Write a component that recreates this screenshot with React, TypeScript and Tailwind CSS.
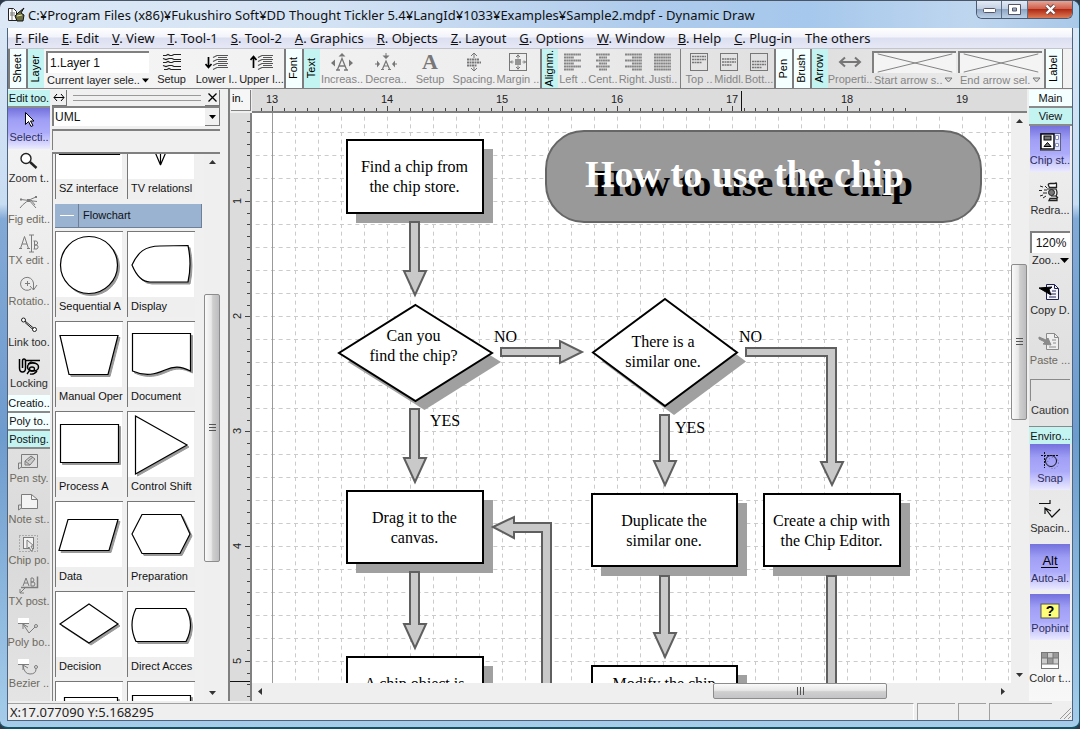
import React from "react";

type Box = { x: number; y: number; w: number; h: number };

const SCROLL_X = 252;
const SCROLL_Y = 113;
const INCH = 115;

/* ---------- small icon helpers ---------- */

function Ico({ children, h = 20, c = "#222" }: { children: React.ReactNode; h?: number; c?: string }) {
  return (
    <svg width="24" height={h} viewBox={`0 0 24 ${h}`} fill="none" stroke={c} strokeWidth="1" aria-hidden="true" className="shrink-0">
      {children}
    </svg>
  );
}

const G = "#7c7c7c";

const icoSelect = <Ico c="#000"><path d="M8.500 1.500v12l3-3 2.500 5 2-1-2.500-4.500H17z" fill="#fff" /></Ico>;
const icoZoom = (
  <Ico c="#222">
    <circle cx="9" cy="6.500" r="5" fill="#fff" strokeWidth="1.400" />
    <path d="M13 10l6.500 6" strokeWidth="2.400" />
  </Ico>
);
const icoFig = (
  <Ico c={G}>
    <path d="M3 15Q8 8 19 4M4 6.500l16 2M11 6l8 9M14 7l4 5" />
    <path d="M3 5.500h2v2H3zM10 6h3v3h-3zM18 3h2v2h-2z" fill={G} stroke="none" />
  </Ico>
);
const icoTx = (
  <Ico c={G}>
    <path d="M3.500 14.500l4-12 4 12M5 10h5M2 14.500h3M10 14.500h3M14.500 1v17M12 1h5M12 18h5M17.500 7v8M16.500 7h3q2.500 2 0 4h-2.500h3q2.500 2 0 4h-3.500" />
  </Ico>
);
const icoRot = (
  <Ico c={G}>
    <path d="M14 14a6.500 6.500 0 1 1 2.500-6v7M13 11l3.500 4 3.500-5M8 8.500h5M10.500 6v5" />
  </Ico>
);
const icoLink = (
  <Ico c="#222">
    <circle cx="6.500" cy="4" r="2" fill="#fff" />
    <circle cx="17.500" cy="13.500" r="2" fill="#fff" />
    <path d="M8 5l8.500 7M8 6.500l8 7" />
  </Ico>
);
const icoLock = (
  <Ico c="#000">
    <path d="M2.500 2v9q0 4 3 4t3-4V4q0-2-1.500-2T5.500 4v7M9 3.500h14" strokeWidth="1.500" />
    <ellipse cx="16" cy="10" rx="5.500" ry="4" strokeWidth="1.500" fill="#ddd" />
    <ellipse cx="15" cy="12" rx="2.500" ry="2" strokeWidth="1.300" />
    <path d="M10 17l3-4M11 7l3-2 6 2M20 14q-3 4-7 3" strokeWidth="1.300" />
  </Ico>
);
const icoPen = (
  <Ico c={G}>
    <path d="M4.500 2.500h16v13h-16zM1.500 17v-6h3M1.500 17l3-2" />
    <path d="M8 13V9l6-5 4 3-5 6zM8 9l5 4M11 9l5-4" fill="#ccc" />
  </Ico>
);
const icoNote = (
  <Ico c={G}>
    <path d="M4.500 1.500h10l6 5v9h-16z" fill="#f3f3f3" />
    <path d="M14.500 1.500v5h6M1.500 17v-5h3M1.500 17l3-2" />
  </Ico>
);
const icoChip = (
  <Ico c={G}>
    <rect x="2.500" y="1.500" width="18" height="16" strokeDasharray="1 2" />
    <rect x="6.500" y="3.500" width="10" height="11" fill="#f3f3f3" />
    <path d="M10 6v9l2-2 2 4 2-1-2-4h3z" fill="#eee" />
  </Ico>
);
const icoTxPost = (
  <Ico c={G}>
    <path d="M4 12.500h16.500v-11" strokeWidth="1.500" />
    <path d="M6 11l3-8 3 8M7 8h4M14 3v8h3q2-2 0-4h-3 2q2-2 0-4zM8 13l-5 5M3 14v4h4" />
  </Ico>
);
const icoPoly = (
  <Ico c={G}>
    <rect x="1" y="2" width="11" height="5" fill="#fff" stroke="none" />
    <path d="M1 7.500h11M6 8l6 9 6-6M6 13V8l5 3" />
    <circle cx="19" cy="10" r="1.500" />
  </Ico>
);
const icoBezier = (
  <Ico c={G}>
    <rect x="1" y="2" width="11" height="5" fill="#fff" stroke="none" />
    <path d="M1 7.500h11M6 8q1 9 7 9t6-5M6 13V8l5 3" />
    <circle cx="19" cy="10" r="1.500" />
  </Ico>
);

const icoChipSt = (
  <Ico h={22} c="#000">
    <rect x="2.500" y="2.500" width="20" height="17" fill="#dfe3ff" strokeDasharray="1 1" />
    <rect x="3" y="3" width="13" height="15" fill="#fff" strokeWidth="1.400" />
    <rect x="6" y="5" width="7" height="4" fill="#777" />
    <path d="M6 15.500l3.500-4 3.500 4z" fill="#777" />
    <path d="M17.500 4.500h3v4h-3zM17.500 12.500h3v3h-3z" fill="#fff" stroke="#8890c8" />
  </Ico>
);
const icoRedraw = (
  <Ico h={22} c="#222">
    <path d="M10.500 4.500q-1-2 2-2h4q2-1 2 0v4h-7zM12 17.500h7v2h-8zM18 15l2 2" fill="#fff" strokeWidth="1.300" />
    <path d="M9 8h9q2 4 0 7h-5" strokeWidth="1.200" />
    <circle cx="13.500" cy="11.500" r="3" fill="#777" />
    <path d="M2 5l3 1M1 9.500h3M6 9h3M2 15l3-1M5 17l3-2M5 12h4M7 5l2 2" />
  </Ico>
);
const icoCopy = (
  <Ico h={22} c="#1c2050">
    <path d="M8.500 3.500h8l4 4v11h-12z" fill="#f4f4ff" />
    <path d="M16.500 3.500v4h4M14 10h4M13 13h5M11 16h7" />
    <path d="M1 7l13-1-3 2.500 2 5.500-6-3.500z" fill="#000" stroke="#000" />
  </Ico>
);
const icoPaste = (
  <Ico h={22} c="#8a8a8a">
    <path d="M8.500 2.500h8l4 4v12h-12z" fill="#eee" />
    <path d="M16.500 2.500v4h4M14 9h4M15 12h3M11 16h7" />
    <path d="M1 6l7 3 2-2 3 7-8-1 2-2-6-3z" fill="#8a8a8a" />
  </Ico>
);
const icoSnap = (
  <Ico h={22} c="#111">
    <path d="M3 6.500h17M6.500 3v16" strokeDasharray="2 1" />
    <circle cx="13" cy="12" r="5.500" />
    <circle cx="15" cy="14" r="5.500" stroke="#66a" strokeDasharray="1 2" />
  </Ico>
);
const icoSpacing = <Ico h={22} c="#111"><path d="M1 4.500h11V1M7 9l7 9 8-8M7 15V9l6 3" strokeWidth="1.200" /></Ico>;
const icoHint = (
  <Ico h={22} c="#555">
    <rect x="3" y="5" width="18" height="14" fill="#fdfd7a" />
    <text x="12" y="17" textAnchor="middle" fill="#000" stroke="none" className="font-['Liberation_Sans'] text-[14px] font-bold">?</text>
  </Ico>
);
const icoAlt = (
  <Ico h={22} c="#000">
    <text x="12" y="16" textAnchor="middle" fill="#000" stroke="none" className="font-['Liberation_Sans'] text-[13px]">Alt</text>
    <path d="M3 18.500h17" />
  </Ico>
);
const icoColor = (
  <Ico h={22} c="#777">
    <rect x="3.500" y="3.500" width="17" height="16" fill="#fff" />
    <path d="M4 4h5v5H4zM15 4h5v5h-5zM9 9h6v6H9z" fill="#999" stroke="none" />
    <path d="M9 4h6v5H9zM4 9h5v6H4zM15 9h5v6h-5z" fill="#ccc" stroke="none" />
    <path d="M9.500 4v11M15 4v11M4 9h16M4 15h16" />
  </Ico>
);

/* ---------- top toolbar icons ---------- */

function Wide({ children, c = "#777" }: { children: React.ReactNode; c?: string }) {
  return (
    <svg width="24" height="18" viewBox="0 0 24 18" fill="none" stroke={c} aria-hidden="true" className="shrink-0">
      {children}
    </svg>
  );
}
const layers = "M8 4.500l4-2h11M8 8.500l4-2h11M8 12.500l4-2h11M8 16.500l4-2h11M13 4.500h9M13 8.500h9M13 12.500h9";
const icoSetupLayer = (
  <Wide c="#222">
    <path d="M3 2.500h3l2-1 2 1h2l2-1h7M3 5.500l3 1 3-1h3l2 1h7M3 9.500h3l2-1 2 1h2l2-1h7M3 12.500l3 1 3-1h3l2 1h7M4 16.500h3l2-1 2 1h10" strokeWidth="1.200" />
  </Wide>
);
const icoLower = (
  <Wide c="#555">
    <path d={layers} strokeWidth="1.200" />
    <path d="M3.500 4v10M0.500 11l3 3.500 3-3.500" stroke="#000" strokeWidth="1.700" />
  </Wide>
);
const icoUpper = (
  <Wide c="#555">
    <path d={layers} strokeWidth="1.200" />
    <path d="M3.500 15V4M0.500 7l3-3.500 3 3.500" stroke="#000" strokeWidth="1.700" />
  </Wide>
);
const icoInc = (
  <Wide>
    <path d="M7.500 16.500l4.500-11 4.500 11M9 13h6M6 17h4M14 17h4" strokeWidth="1.300" />
    <path d="M12 0L8.500 3.500h7zM1 10l4-3.500v7zM23 10l-4-3.500v7z" fill="#777" stroke="none" />
  </Wide>
);
const icoDec = (
  <Wide>
    <path d="M8.500 16L12 8l3.500 8M10 13h4M7 16.500h3M14 16.500h3" strokeWidth="1.200" />
    <path d="M12 6L8.500 2.500h7z M6 11L3 7.500v7zM18 11l3-3.500v7z" fill="#777" stroke="none" />
    <path d="M12 0v3M1 11h3M20 11h3" />
  </Wide>
);
const icoA = (
  <Wide>
    <text x="12" y="16" textAnchor="middle" fill="#777" stroke="none" className="font-['Liberation_Serif'] text-[22px] leading-none font-bold">A</text>
  </Wide>
);
const icoSpace = (
  <Wide>
    <path d="M5 6.500h12M5 9.500h14M5 12.500h10" strokeWidth="1.800" strokeDasharray="2 0.500" />
    <path d="M12 0v5M9 3l3-3 3 3M12 18v-4M9 15l3 3 3-3" />
  </Wide>
);
const icoMargin = (
  <Wide>
    <rect x="3.500" y="0.500" width="17" height="17" />
    <path d="M9 7h6M9 9h6M9 11h6" strokeWidth="1.500" />
    <path d="M12 1.500v4M10 4l2-2 2 2M12 16.500v-4M10 14l2 2 2-2M4.500 9h3M6 7.500L4.500 9 6 10.500M19.500 9h-3M18 7.500L19.500 9 18 10.500" />
  </Wide>
);
const rows = (d: string) => <Wide c="#858585"><path d={d} strokeWidth="2" strokeDasharray="2 0.300" /></Wide>;
const icoLeft = rows("M3 1.500h17M3 4.500h10M3 7.500h17M3 10.500h10M3 13.500h17M3 16.500h10");
const icoCenter = rows("M5 1.500h14M8 4.500h8M5 7.500h14M8 10.500h8M5 13.500h14M8 16.500h8");
const icoRight = rows("M4 1.500h17M11 4.500h10M4 7.500h17M11 10.500h10M4 13.500h17M11 16.500h10");
const icoJust = rows("M3 1.500h17M3 4.500h17M3 7.500h17M3 10.500h17M3 13.500h17M3 16.500h17");
const boxRows = (y: number) => (
  <Wide>
    <rect x="3.500" y="0.500" width="17" height="17" />
    <path d={`M5 ${y}h14M5 ${y + 3}h14M5 ${y + 6}h10`} strokeWidth="1.300" strokeDasharray="2 0.500" />
  </Wide>
);
const icoProps = (
  <Wide>
    <path d="M3 9h18" strokeWidth="2" />
    <path d="M7 4.500L2 9l5 4.500M17 4.500L22 9l-5 4.500" strokeWidth="2" />
  </Wide>
);

/* ---------- window parts ---------- */

function TitleBar() {
  return (
    <header className="flex h-[27px] shrink-0 items-center bg-[linear-gradient(90deg,#dce8f6_0%,#d4e3f4_30%,#aecbec_60%,#a6c8ec_75%,#bfd6ef_90%,#a9c8e8_100%)] pl-2">
      <svg width="17" height="16" viewBox="0 0 17 16" aria-hidden="true" className="shrink-0">
        <path d="M0.500 1.500h5l3 3v9h-8z" fill="#fff" stroke="#222" />
        <path d="M2 6h5M2 8h5M4 2v11" stroke="#777" />
        <path d="M7 9l2 5h6l1-6-3-2 3-5-6 5z" fill="#6d6f43" stroke="#111" />
        <path d="M9 9l5-1" stroke="#e8e8a0" />
      </svg>
      <h1 className="ml-[3px] grow truncate font-['Noto_Sans',sans-serif] text-[13px] leading-6 text-[#111]">
        C:¥Program Files (x86)¥Fukushiro Soft¥DD Thought Tickler 5.4¥LangId¥1033¥Examples¥Sample2.mdpf - Dynamic Draw
      </h1>
      <div className="mr-[6px] flex h-[18px] shrink-0 self-start overflow-hidden rounded-b-md border border-t-0 border-[#4b5a70]">
        <button aria-label="Minimize" className="flex w-[25px] items-center justify-center border-r border-[#5d6d84] bg-[linear-gradient(#e3ebf5,#c3d0e2_45%,#8fa6c4_50%,#bcd0e6)]">
          <svg width="13" height="6" viewBox="0 0 13 6"><rect x="0.500" y="1.500" width="12" height="4" rx="1" fill="#fff" stroke="#556" /></svg>
        </button>
        <button aria-label="Maximize" className="flex w-[26px] items-center justify-center border-r border-[#5d6d84] bg-[linear-gradient(#e3ebf5,#c3d0e2_45%,#8fa6c4_50%,#bcd0e6)]">
          <svg width="13" height="11" viewBox="0 0 13 11"><path d="M0.500 0.500h12v10h-12zM4.500 4h4v3h-4z" fill="#fff" fillRule="evenodd" stroke="#556" /></svg>
        </button>
        <button aria-label="Close" className="flex w-[44px] items-center justify-center bg-[linear-gradient(#e6a596,#d0604c_45%,#b02a14_50%,#dd7b55)]">
          <svg width="13" height="11" viewBox="0 0 13 11"><path d="M2.500 1.500l8 8M10.500 1.500l-8 8" stroke="#644" strokeWidth="4" /><path d="M2.500 1.500l8 8M10.500 1.500l-8 8" stroke="#fff" strokeWidth="2.400" /></svg>
        </button>
      </div>
    </header>
  );
}

const menus: [string, string][] = [
  ["F", ". File"], ["E", ". Edit"], ["V", ". View"], ["T", ". Tool-1"], ["S", ". Tool-2"], ["A", ". Graphics"],
  ["R", ". Objects"], ["Z", ". Layout"], ["G", ". Options"], ["W", ". Window"], ["B", ". Help"], ["C", ". Plug-in"], ["", "The others"],
];

function MenuBar() {
  return (
    <nav className="flex h-[21px] shrink-0 items-center gap-[13px] border-b border-[#c4c4cc] bg-[linear-gradient(#ffffff,#f2f3fb_45%,#dcdff0_50%,#e6e8f6)] pl-[7px] font-['Noto_Sans',sans-serif] text-[13px] text-[#111]">
      {menus.map(([k, rest]) => (
        <button key={k + rest} className="leading-5 whitespace-nowrap"><span className="underline">{k}</span>{rest}</button>
      ))}
    </nav>
  );
}

function VTab({ label, on = false }: { label: string; on?: boolean }) {
  return (
    <button className={`flex w-[18px] shrink-0 items-center justify-center overflow-hidden border-l-2 border-[#7d7d7d] pr-0.5 ${on ? "bg-[#c3f4f1]" : "bg-[#f4ffff]"}`}>
      <span className="rotate-180 whitespace-nowrap [writing-mode:vertical-rl]">{label}</span>
    </button>
  );
}

function Tool({ label, icon, w, off = true }: { label: string; icon: React.ReactNode; w: string; off?: boolean }) {
  return (
    <button className={`flex ${w} shrink-0 flex-col items-center pt-1 ${off ? "text-[#858585]" : "text-[#222]"}`}>
      {icon}
      <span className="leading-4 whitespace-nowrap">{label}</span>
    </button>
  );
}

function ArrowPick({ label }: { label: string }) {
  return (
    <button className="flex w-[86px] shrink-0 flex-col pt-0.5 pr-0.5 text-[#858585]">
      <svg width="84" height="22" viewBox="0 0 84 22" className="border-t-2 border-l-2 border-[#808080] bg-[#f4f4f4]" aria-hidden="true">
        <path d="M1 1L83 21M1 21L83 1" stroke="#777" />
      </svg>
      <span className="flex items-center gap-0.5 pl-0.5 leading-[14px] whitespace-nowrap">
        {label}
        <svg width="9" height="6" viewBox="0 0 9 6" aria-hidden="true"><path d="M1 1h7L4.500 5z" fill="#ddd" stroke="#777" /></svg>
      </span>
    </button>
  );
}

function Toolbar() {
  return (
    <div className="flex h-10 shrink-0 overflow-hidden border-b border-[#808080] bg-[linear-gradient(90deg,#f6f6f6,#ededed_50%,#dedede_75%,#f2f2f2)] text-[11px]">
      <VTab label="Sheet" />
      <VTab label="Layer" on />
      <div className="flex w-[105px] shrink-0 flex-col pt-0.5 pl-0.5">
        <input aria-label="Current layer" defaultValue="1.Layer 1" className="h-[22px] w-full border-t-2 border-l-2 border-[#808080] bg-white pl-0.5 text-[12px] text-[#111]" />
        <button className="flex items-center gap-0.5 pl-px leading-[14px] whitespace-nowrap text-[#222]">
          Current layer sele..
          <svg width="9" height="5" viewBox="0 0 9 5" aria-hidden="true"><path d="M0 0h9L4.500 5z" /></svg>
        </button>
      </div>
      <Tool w="w-[45px]" label="Setup" icon={icoSetupLayer} off={false} />
      <Tool w="w-[45px]" label="Lower l.." icon={icoLower} off={false} />
      <Tool w="w-[45px]" label="Upper l..." icon={icoUpper} off={false} />
      <VTab label="Font" />
      <VTab label="Text" on />
      <Tool w="w-[44px]" label="Increas.." icon={icoInc} />
      <Tool w="w-[44px]" label="Decrea.." icon={icoDec} />
      <Tool w="w-[44px]" label="Setup" icon={icoA} />
      <Tool w="w-[44px]" label="Spacing." icon={icoSpace} />
      <Tool w="w-[44px]" label="Margin .." icon={icoMargin} />
      <VTab label="Alignm." on />
      <Tool w="w-[30px]" label="Left .." icon={icoLeft} />
      <Tool w="w-[30px]" label="Cent.." icon={icoCenter} />
      <Tool w="w-[30px]" label="Right." icon={icoRight} />
      <Tool w="w-[30px]" label="Justi.." icon={icoJust} />
      <div className="mr-[3px] ml-0.5 w-px shrink-0 bg-[#808080]" />
      <Tool w="w-[30px]" label="Top .." icon={boxRows(3.5)} />
      <Tool w="w-[30px]" label="Middl." icon={boxRows(6)} />
      <Tool w="w-[30px]" label="Bott..." icon={boxRows(8.5)} />
      <VTab label="Pen" />
      <VTab label="Brush" />
      <VTab label="Arrow" on />
      <Tool w="w-[44px]" label="Properti.." icon={icoProps} />
      <ArrowPick label="Start arrow s.." />
      <ArrowPick label="End arrow sel." />
      <VTab label="Label" />
      <div className="w-px bg-[#808080]" />
    </div>
  );
}

function HTab({ label, on = false }: { label: string; on?: boolean }) {
  return (
    <button className={`h-[18px] w-full shrink-0 overflow-hidden border-b-2 border-[#8a8a8a] text-[11px] leading-4 whitespace-nowrap text-[#111] ${on ? "bg-[#c3f4f1]" : "bg-[#f4ffff]"}`}>
      {label}
    </button>
  );
}

type SideItem = { label: string; icon: React.ReactNode; tone?: "on" | "off" };

function tone(t?: string) {
  if (t === "on") return "bg-[linear-gradient(#7472dc,#a09ff6_30%,#acabfa_60%,#ecebff)] text-[#2d2d60]";
  if (t === "off") return "text-[#6e6a60]";
  return "text-[#2c2c2c]";
}

function LeftButton({ label, icon, tone: t }: SideItem) {
  return (
    <button className={`flex h-[41px] w-full shrink-0 flex-col items-center pt-[3px] ${tone(t)}`}>
      {icon}
      <span className="leading-3 whitespace-nowrap">{label}</span>
    </button>
  );
}

function RightButton({ label, icon, tone: t }: SideItem) {
  return (
    <div className="h-[50px] w-full shrink-0 pl-px">
      <button className={`flex h-[46px] w-10 flex-col items-center pt-[5px] ${tone(t)}`}>
        {icon}
        <span className="leading-[14px] whitespace-nowrap">{label}</span>
      </button>
    </div>
  );
}

const editTools: SideItem[] = [
  { label: "Selecti..", icon: icoSelect, tone: "on" },
  { label: "Zoom t..", icon: icoZoom },
  { label: "Fig edit..", icon: icoFig, tone: "off" },
  { label: "TX edit .", icon: icoTx, tone: "off" },
  { label: "Rotatio..", icon: icoRot, tone: "off" },
  { label: "Link too.", icon: icoLink },
  { label: "Locking", icon: icoLock },
];
const postTools: SideItem[] = [
  { label: "Pen sty.", icon: icoPen, tone: "off" },
  { label: "Note st..", icon: icoNote, tone: "off" },
  { label: "Chip po.", icon: icoChip, tone: "off" },
  { label: "TX post.", icon: icoTxPost, tone: "off" },
  { label: "Poly bo..", icon: icoPoly, tone: "off" },
  { label: "Bezier ..", icon: icoBezier, tone: "off" },
];

function LeftBar() {
  return (
    <aside className="flex w-[42px] shrink-0 flex-col overflow-hidden bg-[linear-gradient(#f6f6f6,#e6e6e6_45%,#d9d9d9_75%,#e4e4e4)] pt-px text-[11px]">
      <HTab label="Edit too." on />
      {editTools.map((t) => <LeftButton key={t.label} {...t} />)}
      <HTab label="Creatio.." />
      <HTab label="Poly to.." />
      <HTab label="Posting." on />
      {postTools.map((t) => <LeftButton key={t.label} {...t} />)}
    </aside>
  );
}

function RightBar() {
  return (
    <aside className="flex w-[43px] shrink-0 flex-col overflow-hidden bg-[linear-gradient(#f2f2f2,#e0e0e0_45%,#ececec_75%,#f8f8f8)] pt-px text-[11px]">
      <HTab label="Main" />
      <HTab label="View" on />
      <RightButton label="Chip st.." icon={icoChipSt} tone="on" />
      <RightButton label="Redra..." icon={icoRedraw} />
      <div className="h-[50px] shrink-0 pt-[5px] pl-px">
        <input aria-label="Zoom" defaultValue="120%" className="h-[22px] w-10 border-t-2 border-l-2 border-[#808080] bg-white text-center text-[12px] text-[#111]" />
        <button className="flex items-center pl-0.5 leading-[14px] text-[#222]">
          Zoo...
          <svg width="9" height="5" viewBox="0 0 9 5" aria-hidden="true"><path d="M0 0h9L4.500 5z" /></svg>
        </button>
      </div>
      <RightButton label="Copy D." icon={icoCopy} />
      <RightButton label="Paste ..." icon={icoPaste} tone="off" />
      <div className="h-[50px] shrink-0 pt-[3px] pl-px text-center text-[#333]">
        <div className="h-[22px] w-10 border-t border-l border-[#8a8a8a] bg-[#e4e4e4]" />
        <div className="mt-0.5 w-10 leading-[14px]">Caution</div>
      </div>
      <div className="shrink-0 border-t border-[#8a8a8a]">
        <button className="h-[17px] w-full bg-[#c3f4f1] leading-4 whitespace-nowrap text-[#111]">Enviro...</button>
      </div>
      <RightButton label="Snap" icon={icoSnap} tone="on" />
      <RightButton label="Spacin.." icon={icoSpacing} />
      <RightButton label="Auto-al." icon={icoAlt} tone="on" />
      <RightButton label="Pophint" icon={icoHint} tone="on" />
      <RightButton label="Color t..." icon={icoColor} />
    </aside>
  );
}

/* ---------- scroll bars ---------- */

function Grip({ vertical = false }: { vertical?: boolean }) {
  return (
    <svg width="7" height="8" viewBox="0 0 7 8" stroke="#555" aria-hidden="true">
      <path d={vertical ? "M0 0.500h7M0 3.500h7M0 6.500h7" : "M0.500 0v8M3.500 0v8M6.500 0v8"} />
    </svg>
  );
}

function VScroll({ before, thumb, after }: { before: string; thumb: string; after: string }) {
  return (
    <div className="flex w-4 shrink-0 flex-col bg-[#efefef]">
      <button aria-label="Scroll up" className="flex h-4 items-center justify-center">
        <svg width="7" height="4" viewBox="0 0 7 4"><path d="M3.500 0L7 4H0z" fill="#333" /></svg>
      </button>
      <div className={`basis-0 ${before}`} />
      <div className={`flex basis-0 items-center justify-center rounded-xs border border-[#8c8c8c] bg-[linear-gradient(90deg,#fafafa,#e8e8e8_45%,#cfcfcf_55%,#bdbdc0)] ${thumb}`}>
        <Grip vertical />
      </div>
      <div className={`basis-0 ${after}`} />
      <button aria-label="Scroll down" className="flex h-4 items-center justify-center">
        <svg width="7" height="4" viewBox="0 0 7 4"><path d="M0 0h7L3.500 4z" fill="#333" /></svg>
      </button>
    </div>
  );
}

function HScroll() {
  return (
    <div className="flex h-4 shrink-0 bg-[#efefef]">
      <button aria-label="Scroll left" className="flex w-4 items-center justify-center">
        <svg width="4" height="7" viewBox="0 0 4 7"><path d="M4 0v7L0 3.500z" fill="#333" /></svg>
      </button>
      <div className="grow-[446] basis-0" />
      <div className="flex grow-[172] basis-0 items-center justify-center rounded-xs border border-[#8c8c8c] bg-[linear-gradient(#fafafa,#e8e8e8_45%,#cfcfcf_55%,#c4c4c8)]"><Grip /></div>
      <div className="grow-[108] basis-0" />
      <button aria-label="Scroll right" className="flex w-4 items-center justify-center">
        <svg width="4" height="7" viewBox="0 0 4 7"><path d="M0 0v7l4-3.500z" fill="#333" /></svg>
      </button>
    </div>
  );
}

/* ---------- chip palette ---------- */

const flowChips: [string, string][] = [
  ["Sequential A", "M33 4.500a28.500 28.500 0 1 1 0 57a28.500 28.500 0 1 1 0-57z"],
  ["Display", "M4 33C10 20 17 14 32 14L60 13.500Q64 32 60 50H22Q11 50 4 33z"],
  ["Manual Oper", "M4 13.500H62L52 52.500H13z"],
  ["Document", "M4.500 11.500H62.500V49C52 44 46 44 37 48S18 55 4.500 49z"],
  ["Process A", "M4.500 12.500H62.500V50.500H4.500z"],
  ["Control Shift", "M7.500 4L59 33L7.500 62z"],
  ["Data", "M12 17.500H62L53 48.500H3z"],
  ["Preparation", "M14 12.500H53L62 32L52 51.500H14L4 32z"],
  ["Decision", "M33 12L62 32L33 51L4 32z"],
  ["Direct Acces", "M8 16.500H58Q67 33 58 49.500H8Q0 33 8 16.500z"],
  ["", "M8.500 15.500H61.500V48H8.500z"],
  ["", "M4.500 13.500H62.500V48H4.500z"],
];

function ChipCell({ label, d, shadow = true }: { label: string; d: string; shadow?: boolean }) {
  return (
    <button className="flex h-[86px] w-[68px] shrink-0 flex-col border-t border-l border-[#777] bg-[#efefef] text-left">
      <svg width="66" height="65" viewBox="0 0 66 65" className="shrink-0 bg-white" aria-hidden="true">
        {shadow && <path d={d} transform="translate(2 2)" fill="#999" stroke="#999" />}
        <path d={d} fill={shadow ? "#fff" : "none"} stroke="#000" strokeWidth="1.200" />
      </svg>
      <span className="pl-[3px] leading-[18px] whitespace-nowrap text-[#111]">{label}</span>
    </button>
  );
}

function Palette() {
  return (
    <section className="flex w-[178px] shrink-0 flex-col bg-[#f0f0f0] pt-px pl-0.5 text-[11px]">
      <div className="flex h-4 shrink-0 items-center pr-2">
        <button aria-label="Switch side" className="flex h-4 w-[15px] items-center justify-center border-r border-b border-[#777]">
          <svg width="12" height="9" viewBox="0 0 12 9" fill="none" stroke="#000"><path d="M1 4.500h10M4 1L1 4.500 4 8M8 1l3 3.500L8 8" /></svg>
        </button>
        <div className="mr-1 ml-1.5 h-[6px] grow border-y border-[#999]" />
        <button aria-label="Close palette" className="flex h-4 w-[15px] items-center justify-center border-r border-b border-[#777]">
          <svg width="9" height="9" viewBox="0 0 9 9" stroke="#000" strokeWidth="1.300"><path d="M0.500 0.500l8 8M8.500 0.500l-8 8" /></svg>
        </button>
      </div>
      <div className="relative mr-2 shrink-0">
        <select aria-label="Chip set" className="block h-[20px] w-full appearance-none border-t-2 border-l-2 border-[#808080] bg-white pl-px text-[12px] leading-4 text-[#111]">
          <option>UML</option>
        </select>
        <span className="pointer-events-none absolute top-0.5 right-0 flex h-[18px] w-[15px] items-center justify-center border-r border-b border-[#777] bg-[#f0f0f0]">
          <svg width="7" height="4" viewBox="0 0 7 4"><path d="M0 0h7L3.500 4z" /></svg>
        </span>
      </div>
      <input aria-label="Chip filter" className="mt-[3px] mr-2 h-[21px] shrink-0 border-t-2 border-l border-[#808080] bg-[#f0f0f0]" />
      <div className="mt-0.5 mr-2 flex min-h-0 grow border-t-2 border-l border-[#808080]">
        <div className="flex min-w-0 grow flex-col overflow-hidden pl-0.5">
          <div className="mt-[-41px] flex shrink-0 gap-1">
            <ChipCell label="SZ interface" d="M3.500 10.500H63.500V40.500H3.500z" shadow={false} />
            <ChipCell label="TV relationsl" d="M32.500 10V51L27 38M32.500 51L38 38" shadow={false} />
          </div>
          <div className="mt-[5px] mb-[3px] flex h-6 w-[147px] shrink-0 items-center border-r border-b border-[#6e7f98] bg-[#99b3d1]">
            <span className="flex h-full w-6 items-center justify-center border-r border-[#6e7f98]"><span className="h-px w-3.5 bg-white" /></span>
            <span className="pl-1 text-[#111]">Flowchart</span>
          </div>
          <div className="grid shrink-0 grid-cols-[68px_68px] gap-1">
            {flowChips.map(([label, d]) => <ChipCell key={d} label={label} d={d} />)}
          </div>
        </div>
        <VScroll before="grow-[124]" thumb="grow-[268]" after="grow-[123]" />
      </div>
    </section>
  );
}

/* ---------- rulers ---------- */

function HRuler() {
  const ticks = Array.from({ length: 66 }, (_, i) => 272 - INCH + i * 11.5).filter((x) => x > SCROLL_X);
  return (
    <svg width="100%" height="24" className="block min-w-0 grow border-b-2 border-[#808080] bg-[#dcdcdc]" aria-label="Horizontal ruler">
      <g transform={`translate(${-SCROLL_X} 0)`}>
        {ticks.map((x) => {
          const major = Math.abs(((x - 272) / INCH) % 1) < 0.01;
          return <path key={x} d={`M${Math.round(x) + 0.5} ${major ? 17 : 19}V23`} stroke="#444" />;
        })}
        {[13, 14, 15, 16, 17, 18, 19].map((n, i) => (
          <text key={n} x={272 + i * INCH} y="14" textAnchor="middle" fill="#222" className="text-[11px]">{n}</text>
        ))}
        <path d="M741.500 2V23" stroke="#111" />
      </g>
    </svg>
  );
}

function VRuler() {
  const ticks = Array.from({ length: 60 }, (_, i) => 201 - INCH + i * 11.5).filter((y) => y > SCROLL_Y);
  return (
    <svg width="22" height="100%" className="block border-r-2 border-[#808080] bg-[#dcdcdc]" aria-label="Vertical ruler">
      <g transform={`translate(0 ${-SCROLL_Y})`}>
        {ticks.map((y) => {
          const major = Math.abs(((y - 201) / INCH) % 1) < 0.01;
          return <path key={y} d={`M${major ? 15 : 17} ${Math.round(y) + 0.5}H20`} stroke="#444" />;
        })}
        {[1, 2, 3, 4, 5].map((n, i) => (
          <text key={n} transform={`translate(11 ${201 + i * INCH}) rotate(-90)`} textAnchor="middle" fill="#222" className="text-[11px]">{n}</text>
        ))}
        <path d="M0 681.500H20" stroke="#111" />
      </g>
    </svg>
  );
}

/* ---------- diagram ---------- */

function Card({ x, y, w, h, lines, top = 32 }: Box & { lines: string[]; top?: number }) {
  return (
    <g>
      <rect x={x + 9} y={y + 9} width={w} height={h} fill="#a0a0a0" />
      <rect x={x} y={y} width={w - 1} height={h - 1} fill="#fff" stroke="#000" strokeWidth="2" />
      {lines.map((l, i) => <text key={l} x={x + w / 2 - 1} y={y + top + i * 20} textAnchor="middle">{l}</text>)}
    </g>
  );
}

function Diamond({ x, y, w, h, lines, top }: Box & { lines: string[]; top: number }) {
  const pts = (d: number) => `${x + w / 2 + d},${y + d} ${x + w + d},${y + h / 2 + d} ${x + w / 2 + d},${y + h + d} ${x + d},${y + h / 2 + d}`;
  return (
    <g>
      <polygon points={pts(9)} fill="#a0a0a0" />
      <polygon points={pts(0)} fill="#fff" stroke="#000" strokeWidth="2" />
      {lines.map((l, i) => <text key={l} x={x + w / 2 - 2} y={top + i * 20} textAnchor="middle">{l}</text>)}
    </g>
  );
}

function Down({ x, y, to }: { x: number; y: number; to: number }) {
  return <path d={`M${x - 5} ${y}H${x + 4}V${to - 24}H${x + 11}L${x} ${to}L${x - 11} ${to - 24}H${x - 5}z`} />;
}

function Diagram() {
  return (
    <svg width="100%" height="100%" className="block bg-white" aria-label="How to use the chip">
      <defs>
        <pattern id="grid" x="19" y="19" width="23" height="23" patternUnits="userSpaceOnUse">
          <path d="M1.500 0V23M0 0.500H23" stroke="#cbcbcb" strokeDasharray="4 3.670" fill="none" />
        </pattern>
      </defs>
      <rect width="100%" height="100%" fill="url(#grid)" />
      <g transform={`translate(${-SCROLL_X} ${-SCROLL_Y})`} fill="#000" className="font-['Liberation_Serif',serif] text-[16px]">
        <path d="M272.500 113V1200" stroke="#999" />
        <Card x={347} y={140} w={137} h={74} lines={["Find a chip from", "the chip store."]} />
        <rect x="546" y="131" width="435" height="91" rx="38" fill="#999" stroke="#666" strokeWidth="2" />
        <g className="text-[38px] font-bold">
          <text x="594" y="196">How to use the chip</text>
          <text x="585" y="187" fill="#fff">How to use the chip</text>
        </g>
        <Diamond x={339} y={305} w={153} h={96} lines={["Can you", "find the chip?"]} top={341} />
        <Diamond x={593} y={299} w={144} h={107} lines={["There is a", "similar one."]} top={347} />
        <Card x={347} y={491} w={137} h={73} lines={["Drag it to the", "canvas."]} />
        <Card x={592} y={494} w={146} h={73} lines={["Duplicate the", "similar one."]} />
        <Card x={764} y={494} w={137} h={73} lines={["Create a chip with", "the Chip Editor."]} />
        <Card x={347} y={657} w={137} h={73} lines={["A chip object is"]} top={32} />
        <Card x={592} y={666} w={146} h={73} lines={["Modify the chip"]} top={23} />
        <g fill="#c9c9c9" stroke="#5f5f5f" strokeWidth="2">
          <Down x={415} y={222} to={295} />
          <Down x={415} y={409} to={482} />
          <Down x={415} y={572} to={648} />
          <Down x={665} y={415} to={485} />
          <Down x={665} y={576} to={657} />
          <path d="M501 348H560V341L582 352L560 363V356H501z" />
          <path d="M746 348H836V462H843L832 485L821 462H827V356H746z" />
          <path d="M827 740V576H836V740z" />
          <path d="M493 527L514 517V523H551V740H542V532H514V538z" />
        </g>
        <text x="494" y="342">NO</text>
        <text x="739" y="342">NO</text>
        <text x="430" y="426">YES</text>
        <text x="675" y="433">YES</text>
      </g>
    </svg>
  );
}

function Workspace() {
  return (
    <main className="flex min-w-0 grow flex-col border-l-2 border-[#808080] bg-[#efefef]">
      <div className="flex shrink-0">
        <div className="m-px flex h-[21px] w-5 shrink-0 items-start overflow-hidden border-r border-b border-[#808080] bg-[#f6f6f6] pl-px text-[11px]">in.</div>
        <HRuler />
        <div className="w-0.5" />
      </div>
      <div className="flex min-h-0 grow">
        <div className="w-[22px] shrink-0 overflow-hidden"><VRuler /></div>
        <div className="flex min-w-0 grow flex-col">
          <div className="flex min-h-0 grow">
            <div className="relative min-w-0 grow overflow-hidden">
              <div className="absolute inset-0"><Diagram /></div>
            </div>
            <VScroll before="grow-[135]" thumb="grow-[155]" after="grow-[248]" />
          </div>
          <div className="flex shrink-0 pb-0.5">
            <div className="grow"><HScroll /></div>
            <div className="w-4" />
          </div>
        </div>
        <div className="w-0.5 shrink-0" />
      </div>
    </main>
  );
}

function StatusBar() {
  return (
    <footer className="flex h-[19px] shrink-0 gap-[3px] bg-[#efefef] pt-0.5 font-['Noto_Sans',sans-serif] text-[13px] text-[#222]">
      <div className="grow border-t border-r border-t-[#a0a0a0] border-r-white pl-0.5 leading-4">X:17.077090 Y:5.168295</div>
      <div className="w-[38px] border-t border-l border-[#a0a0a0]" />
      <div className="w-7 border-t border-l border-[#a0a0a0]" />
      <div className="w-[63px] border-t border-l border-[#a0a0a0]" />
      <svg width="17" height="17" viewBox="0 0 17 17" stroke="#999" aria-hidden="true"><path d="M5 16L16 5M9 16l7-7M13 16l3-3" /></svg>
    </footer>
  );
}

export default function App() {
  return (
    <div className="h-screen w-full overflow-hidden bg-[#2c3a49] font-['Liberation_Sans',sans-serif]">
      <div className="flex h-full flex-col overflow-hidden rounded-lg border-t border-r border-b-2 border-t-[#4a5565] border-r-[#1d5a72] border-b-[#145366] bg-[linear-gradient(#dce8f6,#c8dcf2_28%,#83a9d6_30%,#6e9bcd_60%,#a5cdea)]">
        <TitleBar />
        <div className="mr-1.5 mb-1.5 ml-[7px] flex min-h-0 grow flex-col border-x border-b border-[#4c6480] bg-[#f0f0f0]">
          <MenuBar />
          <Toolbar />
          <div className="flex min-h-0 grow">
            <LeftBar />
            <Palette />
            <Workspace />
            <RightBar />
          </div>
          <StatusBar />
        </div>
      </div>
    </div>
  );
}
